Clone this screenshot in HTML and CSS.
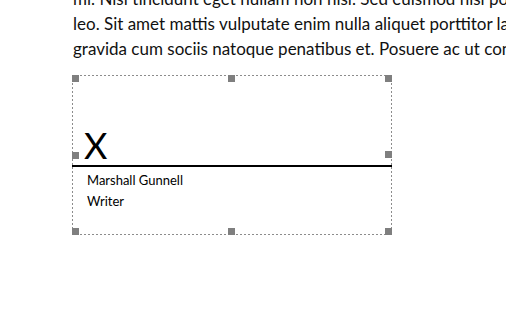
FILE: index.html
```html
<!DOCTYPE html>
<html>
<head>
<meta charset="utf-8">
<link rel="stylesheet" href="styles.css">
</head>
<body>
<div class="page">
  <div class="para">
    <p class="line">mi. Nisi tincidunt eget nullam non nisi. Sed euismod nisi porta lorem mollis aliquam ut porttitor</p>
    <p class="line">leo. Sit amet mattis vulputate enim nulla aliquet porttitor lacus luctus accumsan tortor posuere ac ut</p>
    <p class="line">gravida cum sociis natoque penatibus et. Posuere ac ut consequat semper viverra nam libero justo</p>
  </div>
  <div class="sig-box">
    <div class="sig-area"><span class="sig-x">X</span></div>
    <div class="sig-line"></div>
    <div class="signer">
      <div class="signer-name">Marshall Gunnell</div>
      <div class="signer-title">Writer</div>
    </div>
    <span class="handle h-tl"></span>
    <span class="handle h-tm"></span>
    <span class="handle h-tr"></span>
    <span class="handle h-ml"></span>
    <span class="handle h-mr"></span>
    <span class="handle h-bl"></span>
    <span class="handle h-bm"></span>
    <span class="handle h-br"></span>
  </div>
</div>
</body>
</html>
```

FILE: styles.css
```css
html, body {
  margin: 0;
  padding: 0;
  background: #ffffff;
  overflow: hidden;
}

.page {
  width: 506px;
  height: 314px;
  overflow: hidden;
  padding-left: 73px;
  box-sizing: border-box;
  font-family: Lato, "Liberation Sans", sans-serif;
  color: #111;
}

.para {
  margin-top: -14px;
}

.line {
  margin: 0;
  font-size: 17px;
  line-height: 25px;
  white-space: nowrap;
}

.sig-box {
  position: relative;
  margin-top: 14px;
  margin-left: -1px;
  width: 320px;
  height: 160px;
  box-sizing: border-box;
  padding: 1px;
  background:
    repeating-linear-gradient(90deg, #8c8c8c 0 2px, transparent 2px 4px) top left / 100% 1px no-repeat,
    repeating-linear-gradient(90deg, #8c8c8c 0 2px, transparent 2px 4px) bottom left / 100% 1px no-repeat,
    repeating-linear-gradient(180deg, #8c8c8c 0 2px, transparent 2px 4px) top left / 1px 100% no-repeat,
    repeating-linear-gradient(180deg, #8c8c8c 0 2px, transparent 2px 4px) top right / 1px 100% no-repeat;
}

.sig-area {
  height: 89px;
  display: flex;
  align-items: flex-end;
  padding-left: 11px;
}

.sig-x {
  font-size: 36px;
  line-height: 36px;
  color: #000;
  margin-bottom: 2px;
}

.sig-line {
  margin: 0 -1px;
  height: 2px;
  background: #000;
}

.signer {
  padding-left: 14px;
  padding-top: 3px;
  font-size: 13px;
  line-height: 21px;
  color: #000;
}

.handle {
  position: absolute;
  width: 7px;
  height: 7px;
  background: #7f7f7f;
}

.h-tl { left: 0; top: 0; }
.h-tm { left: 156px; top: 0; }
.h-tr { right: 0; top: 0; }
.h-ml { left: 0; top: 77px; }
.h-mr { right: 0; top: 76px; }
.h-bl { left: 0; bottom: 0; }
.h-bm { left: 156px; bottom: 0; }
.h-br { right: 0; bottom: 0; }
```
